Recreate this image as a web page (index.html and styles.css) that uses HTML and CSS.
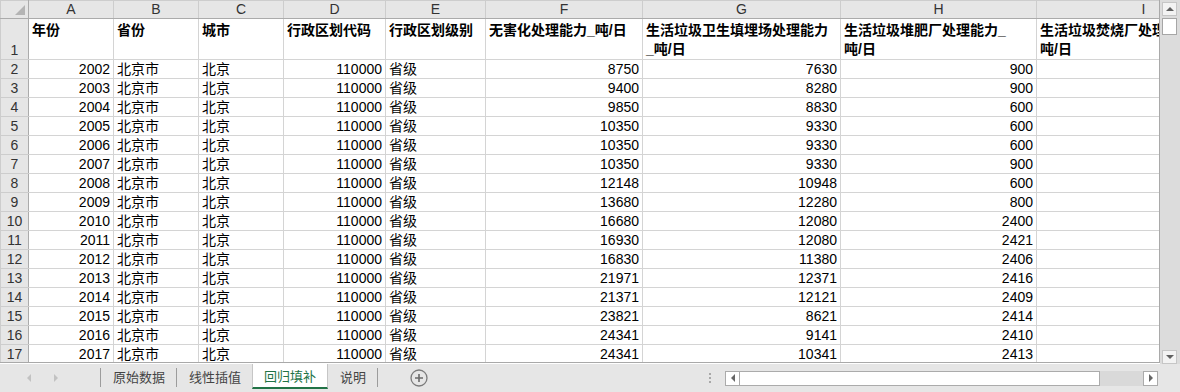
FILE: index.html
```html
<!doctype html>
<html lang="zh-CN">
  <head>
    <meta charset="utf-8" />
    <title>回归填补</title>
    <link rel="stylesheet" href="styles.css">
  </head>
  <body>
    <div class="window">
      <div class="sheet">
        <div class="grid">
          <table>
            <colgroup>
              <col class="c-rh"><col class="c-a"><col class="c-b"><col class="c-c"><col class="c-d">
              <col class="c-e"><col class="c-f"><col class="c-g"><col class="c-h"><col class="c-i">
            </colgroup>
            <tr class="letters">
              <th class="corner"><div class="corner-box"><span class="tri"></span></div></th>
              <th>A</th><th>B</th><th>C</th><th>D</th><th>E</th><th>F</th><th>G</th><th>H</th><th>I</th>
            </tr>
            <tr class="titles">
              <th class="rh">1</th>
              <td>年份</td><td>省份</td><td>城市</td><td>行政区划代码</td><td>行政区划级别</td>
              <td>无害化处理能力_吨/日</td>
              <td>生活垃圾卫生填埋场处理能力<br>_吨/日</td>
              <td>生活垃圾堆肥厂处理能力_<br>吨/日</td>
              <td>生活垃圾焚烧厂处理能力_<br>吨/日</td>
            </tr>
            <tr><th class="rh">2</th><td class="n">2002</td><td>北京市</td><td>北京</td><td class="n">110000</td><td>省级</td><td class="n">8750</td><td class="n">7630</td><td class="n">900</td><td></td></tr>
            <tr><th class="rh">3</th><td class="n">2003</td><td>北京市</td><td>北京</td><td class="n">110000</td><td>省级</td><td class="n">9400</td><td class="n">8280</td><td class="n">900</td><td></td></tr>
            <tr><th class="rh">4</th><td class="n">2004</td><td>北京市</td><td>北京</td><td class="n">110000</td><td>省级</td><td class="n">9850</td><td class="n">8830</td><td class="n">600</td><td></td></tr>
            <tr><th class="rh">5</th><td class="n">2005</td><td>北京市</td><td>北京</td><td class="n">110000</td><td>省级</td><td class="n">10350</td><td class="n">9330</td><td class="n">600</td><td></td></tr>
            <tr><th class="rh">6</th><td class="n">2006</td><td>北京市</td><td>北京</td><td class="n">110000</td><td>省级</td><td class="n">10350</td><td class="n">9330</td><td class="n">600</td><td></td></tr>
            <tr><th class="rh">7</th><td class="n">2007</td><td>北京市</td><td>北京</td><td class="n">110000</td><td>省级</td><td class="n">10350</td><td class="n">9330</td><td class="n">900</td><td></td></tr>
            <tr><th class="rh">8</th><td class="n">2008</td><td>北京市</td><td>北京</td><td class="n">110000</td><td>省级</td><td class="n">12148</td><td class="n">10948</td><td class="n">600</td><td></td></tr>
            <tr><th class="rh">9</th><td class="n">2009</td><td>北京市</td><td>北京</td><td class="n">110000</td><td>省级</td><td class="n">13680</td><td class="n">12280</td><td class="n">800</td><td></td></tr>
            <tr><th class="rh">10</th><td class="n">2010</td><td>北京市</td><td>北京</td><td class="n">110000</td><td>省级</td><td class="n">16680</td><td class="n">12080</td><td class="n">2400</td><td></td></tr>
            <tr><th class="rh">11</th><td class="n">2011</td><td>北京市</td><td>北京</td><td class="n">110000</td><td>省级</td><td class="n">16930</td><td class="n">12080</td><td class="n">2421</td><td></td></tr>
            <tr><th class="rh">12</th><td class="n">2012</td><td>北京市</td><td>北京</td><td class="n">110000</td><td>省级</td><td class="n">16830</td><td class="n">11380</td><td class="n">2406</td><td></td></tr>
            <tr><th class="rh">13</th><td class="n">2013</td><td>北京市</td><td>北京</td><td class="n">110000</td><td>省级</td><td class="n">21971</td><td class="n">12371</td><td class="n">2416</td><td></td></tr>
            <tr><th class="rh">14</th><td class="n">2014</td><td>北京市</td><td>北京</td><td class="n">110000</td><td>省级</td><td class="n">21371</td><td class="n">12121</td><td class="n">2409</td><td></td></tr>
            <tr><th class="rh">15</th><td class="n">2015</td><td>北京市</td><td>北京</td><td class="n">110000</td><td>省级</td><td class="n">23821</td><td class="n">8621</td><td class="n">2414</td><td></td></tr>
            <tr><th class="rh">16</th><td class="n">2016</td><td>北京市</td><td>北京</td><td class="n">110000</td><td>省级</td><td class="n">24341</td><td class="n">9141</td><td class="n">2410</td><td></td></tr>
            <tr><th class="rh">17</th><td class="n">2017</td><td>北京市</td><td>北京</td><td class="n">110000</td><td>省级</td><td class="n">24341</td><td class="n">10341</td><td class="n">2413</td><td></td></tr>
            <tr><th class="rh">18</th><td></td><td></td><td></td><td></td><td></td><td></td><td></td><td></td><td></td></tr>
          </table>
        </div>
        <div class="vscroll">
          <div class="sbtn"><span class="arr-up"></span></div>
          <div class="vthumb"></div>
          <div class="vtrack"></div>
          <div class="sbtn"><span class="arr-down"></span></div>
        </div>
      </div>

      <div class="tabbar">
        <div class="tab-nav">
          <span class="nav-left"></span>
          <span class="nav-right"></span>
        </div>
        <span class="sep"></span>
        <div class="tab">原始数据</div>
        <span class="sep"></span>
        <div class="tab">线性插值</div>
        <div class="tab active">回归填补</div>
        <div class="tab">说明</div>
        <span class="sep"></span>
        <svg class="add-sheet" width="18" height="18" viewBox="0 0 18 18">
          <circle cx="9" cy="9" r="8" fill="none" stroke="#7b7b7b" stroke-width="1.3"/>
          <path d="M9 5v8M5 9h8" stroke="#6a6a6a" stroke-width="1.6"/>
        </svg>
        <div class="spacer"></div>
        <div class="dots"><i></i><i></i><i></i></div>
        <div class="hscroll">
          <div class="hbtn"><span class="arr-left"></span></div>
          <div class="hthumb"></div>
          <div class="htrack"></div>
          <div class="hbtn"><span class="arr-right"></span></div>
        </div>
      </div>
    </div>
  </body>
</html>
```

FILE: styles.css
```css
body
{
    margin: 0;
    width: 1180px;
    height: 392px;
    overflow: hidden;
    background: #fff;
    font-family: "Liberation Sans", "Noto Sans CJK SC", sans-serif;
}

.window
{
    display: flex;
    flex-direction: column;
    height: 392px;
}

.sheet
{
    display: flex;
    height: 364px;
}

.grid
{
    width: 1159px;
    height: 362px;
    overflow: hidden;
    border-right: 1px solid #a9a9a9;
    border-bottom: 1px solid #a9a9a9;
}

table
{
    border-collapse: collapse;
    table-layout: fixed;
    width: 1250px;
    font-size: 14px;
    color: #000;
}

.c-rh { width: 28px; }
.c-a { width: 85px; }
.c-b { width: 85px; }
.c-c { width: 85px; }
.c-d { width: 102px; }
.c-e { width: 100px; }
.c-f { width: 157px; }
.c-g { width: 198px; }
.c-h { width: 196px; }
.c-i { width: 214px; }

td
{
    border: 1px solid #d4d4d4;
    height: 18px;
    padding: 0 3px;
    line-height: 18px;
    vertical-align: bottom;
    white-space: nowrap;
    overflow: hidden;
}

td.n
{
    text-align: right;
}

th
{
    background: #e6e6e6;
    font-weight: normal;
    color: #333;
    padding: 0;
    border: 1px solid #cdcdcd;
}

.letters th
{
    height: 17px;
    font-size: 14px;
    line-height: 17px;
    border-bottom-color: #ababab;
    vertical-align: middle;
}

th.rh
{
    font-size: 14px;
    line-height: 18px;
    vertical-align: bottom;
    text-align: center;
    border-right-color: #ababab;
}

th.corner
{
    border-right-color: #ababab;
}

.corner-box
{
    display: flex;
    justify-content: flex-end;
    align-items: flex-end;
    height: 17px;
    padding: 0 3px 3px 0;
    box-sizing: border-box;
}

.tri
{
    width: 0;
    height: 0;
    border-left: 10px solid transparent;
    border-bottom: 10px solid #b4b4b4;
}

.titles td
{
    height: 37px;
    padding-top: 2px;
    box-sizing: border-box;
    line-height: 19px;
    vertical-align: top;
    font-weight: bold;
}

.titles th.rh
{
    height: 37px;
}

/* vertical scrollbar */
.vscroll
{
    width: 20px;
    background: #dcdcdc;
    display: flex;
    flex-direction: column;
    padding: 2px 3px 0 2px;
    box-sizing: border-box;
}

.sbtn
{
    height: 14px;
    background: #f3f3f3;
    border: 1px solid #c6c6c6;
    box-sizing: border-box;
    display: flex;
    align-items: center;
    justify-content: center;
}

.vthumb
{
    height: 17px;
    margin-top: 2px;
    background: #fff;
    border: 1px solid #a6a6a6;
    box-sizing: border-box;
}

.vtrack
{
    flex: 1;
}

.arr-up
{
    border-left: 4px solid transparent;
    border-right: 4px solid transparent;
    border-bottom: 4px solid #606060;
}

.arr-down
{
    border-left: 4px solid transparent;
    border-right: 4px solid transparent;
    border-top: 4px solid #606060;
}

/* sheet tabs */
.tabbar
{
    display: flex;
    align-items: center;
    height: 28px;
    background: #e6e6e6;
    font-size: 13px;
    color: #444;
}

.tab-nav
{
    width: 100px;
    display: flex;
    align-items: center;
    padding-left: 27px;
    box-sizing: border-box;
    gap: 23px;
}

.nav-left
{
    border-top: 4px solid transparent;
    border-bottom: 4px solid transparent;
    border-right: 4px solid #c2c2c2;
}

.nav-right
{
    border-top: 4px solid transparent;
    border-bottom: 4px solid transparent;
    border-left: 4px solid #c2c2c2;
}

.sep
{
    align-self: flex-start;
    width: 1px;
    height: 19px;
    margin-top: 4px;
    background: #9c9c9c;
}

.tab
{
    align-self: flex-start;
    height: 25px;
    padding: 0 11px 0 12px;
    display: flex;
    align-items: center;
    box-sizing: border-box;
}

.tab.active
{
    background: #fff;
    color: #217346;
    border-left: 1px solid #c6c6c6;
    border-right: 1px solid #c6c6c6;
    border-bottom: 2px solid #217346;
    padding: 0 11px;
}

.add-sheet
{
    margin-left: 32px;
}

.spacer
{
    flex: 1;
}

.dots
{
    display: flex;
    flex-direction: column;
    gap: 2px;
    margin-right: 14px;
}

.dots i
{
    width: 2px;
    height: 2px;
    background: #a8a8a8;
}

.hscroll
{
    display: flex;
    width: 433px;
    height: 15px;
    margin-right: 22px;
}

.hbtn
{
    width: 15px;
    background: #fff;
    border: 1px solid #ababab;
    box-sizing: border-box;
    display: flex;
    align-items: center;
    justify-content: center;
}

.hthumb
{
    width: 360px;
    background: #fff;
    border: 1px solid #ababab;
    border-left: none;
    box-sizing: border-box;
}

.htrack
{
    flex: 1;
    background: #d9d9d9;
}

.arr-left
{
    border-top: 4px solid transparent;
    border-bottom: 4px solid transparent;
    border-right: 4px solid #666;
}

.arr-right
{
    border-top: 4px solid transparent;
    border-bottom: 4px solid transparent;
    border-left: 4px solid #666;
}
```
